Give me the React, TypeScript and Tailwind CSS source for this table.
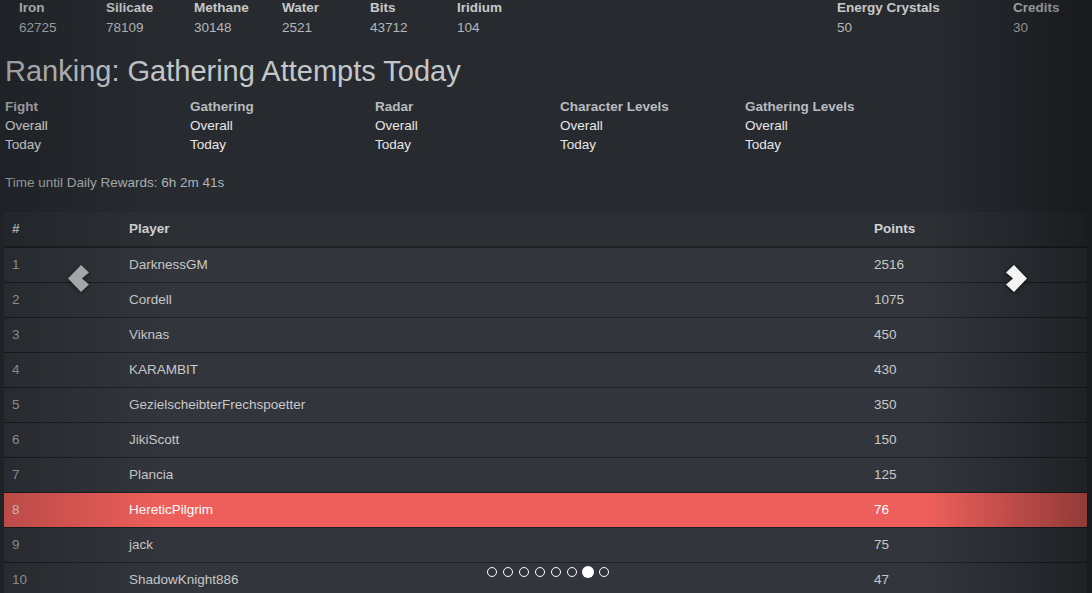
import React from "react";

const resources = [
  { name: "Iron", value: "62725" },
  { name: "Silicate", value: "78109" },
  { name: "Methane", value: "30148" },
  { name: "Water", value: "2521" },
  { name: "Bits", value: "43712" },
  { name: "Iridium", value: "104" },
  { name: "Energy Crystals", value: "50" },
  { name: "Credits", value: "30" },
];

const categories = ["Fight", "Gathering", "Radar", "Character Levels", "Gathering Levels"];

const rows = [
  { rank: 1, player: "DarknessGM", points: 2516 },
  { rank: 2, player: "Cordell", points: 1075 },
  { rank: 3, player: "Viknas", points: 450 },
  { rank: 4, player: "KARAMBIT", points: 430 },
  { rank: 5, player: "GezielscheibterFrechspoetter", points: 350 },
  { rank: 6, player: "JikiScott", points: 150 },
  { rank: 7, player: "Plancia", points: 125 },
  { rank: 8, player: "HereticPilgrim", points: 76, me: true },
  { rank: 9, player: "jack", points: 75 },
  { rank: 10, player: "ShadowKnight886", points: 47 },
];

function Chevron({ dir, className }: { dir: "left" | "right"; className: string }) {
  const pts = dir === "left"
    ? "0,13.5 13,0 21,7.5 14,13.5 21,19.5 13,27"
    : "21,13.5 8,0 0,7.5 7,13.5 0,19.5 8,27";
  return (
    <svg width="21" height="27" viewBox="0 0 21 27" className={className}>
      <polygon points={pts} fill="currentColor" />
    </svg>
  );
}

export default function App() {
  return (
    <div className="relative w-[1092px] h-[593px] overflow-hidden bg-[#272b30] font-['Liberation_Sans',Arial,sans-serif] text-[13.5px] text-[#c8c8c8]">
      {/* resources bar */}
      <div className="grid grid-cols-[87px_88px_88px_88px_87px_380px_176px_60px] pl-[19px] mt-[-2px] leading-[20px]">
        {resources.map((r) => (
          <div key={r.name}>
            <div className="font-bold text-[#c8c8c8]">{r.name}</div>
            <div className="text-[#b4b7bb]">{r.value}</div>
          </div>
        ))}
      </div>

      <h3 className="mt-[17px] pl-[5px] text-[29px] leading-[32px] text-[#c4c7ca]">Ranking: Gathering Attempts Today</h3>

      <div className="mt-[10px] pl-[5px] grid grid-cols-[185px_185px_185px_185px_185px] leading-[19px]">
        {categories.map((c) => (
          <div key={c}>
            <div className="font-bold text-[#b8bbbf]">{c}</div>
            <div className="text-[#e6e6e6]">Overall</div>
            <div className="text-[#e6e6e6]">Today</div>
          </div>
        ))}
      </div>

      <div className="mt-[19px] pl-[5px] leading-[19px] text-[#b0b3b7]">Time until Daily Rewards: 6h 2m 41s</div>

      <div className="mt-[20px] ml-[4px] w-[1083px]">
        <div className="flex h-[36px] items-center bg-[#2c3035] border-b-2 border-[#1d1f23] font-bold text-[#d0d2d4]">
          <div className="w-[117px] pl-[8px]">#</div>
          <div className="w-[745px] pl-[8px]">Player</div>
          <div className="flex-1 pl-[8px]">Points</div>
        </div>
        {rows.map((r) => (
          <div
            key={r.rank}
            className={
              r.me
                ? "flex h-[35px] items-center border-b border-[#1d1f23] bg-[#ee5f5b] text-white"
                : "flex h-[35px] items-center border-b border-[#1d1f23] bg-[#32363c] text-[#c8c8c8]"
            }
          >
            <div className={r.me ? "w-[117px] pl-[8px] text-[#f4dede]" : "w-[117px] pl-[8px] text-[#a9acb0]"}>{r.rank}</div>
            <div className="w-[745px] pl-[8px]">{r.player}</div>
            <div className="flex-1 pl-[8px]">{r.points}</div>
          </div>
        ))}
      </div>

      {/* carousel controls */}
      <div className="absolute inset-y-0 left-0 w-[164px] bg-[linear-gradient(to_right,rgba(0,0,0,0.22),rgba(0,0,0,0))]" />
      <div className="absolute inset-y-0 right-0 w-[164px] bg-[linear-gradient(to_left,rgba(0,0,0,0.4),rgba(0,0,0,0))]" />
      <Chevron dir="left" className="absolute left-[68px] top-[265px] text-[#a3a5a8] drop-shadow-[0_1px_2px_rgba(0,0,0,0.6)]" />
      <Chevron dir="right" className="absolute left-[1006px] top-[265px] text-[#f4f4f4] drop-shadow-[0_1px_2px_rgba(0,0,0,0.6)]" />

      {/* indicators */}
      <div className="absolute left-[486px] top-[566px] flex items-center gap-[4px]">
        {Array.from({ length: 8 }).map((_, i) =>
          i === 6 ? (
            <span key={i} className="block w-[12px] h-[12px] rounded-full bg-white" />
          ) : (
            <span key={i} className="block w-[12px] h-[12px] p-[1px]">
              <span className="block w-[10px] h-[10px] rounded-full border border-white" />
            </span>
          )
        )}
      </div>
    </div>
  );
}
